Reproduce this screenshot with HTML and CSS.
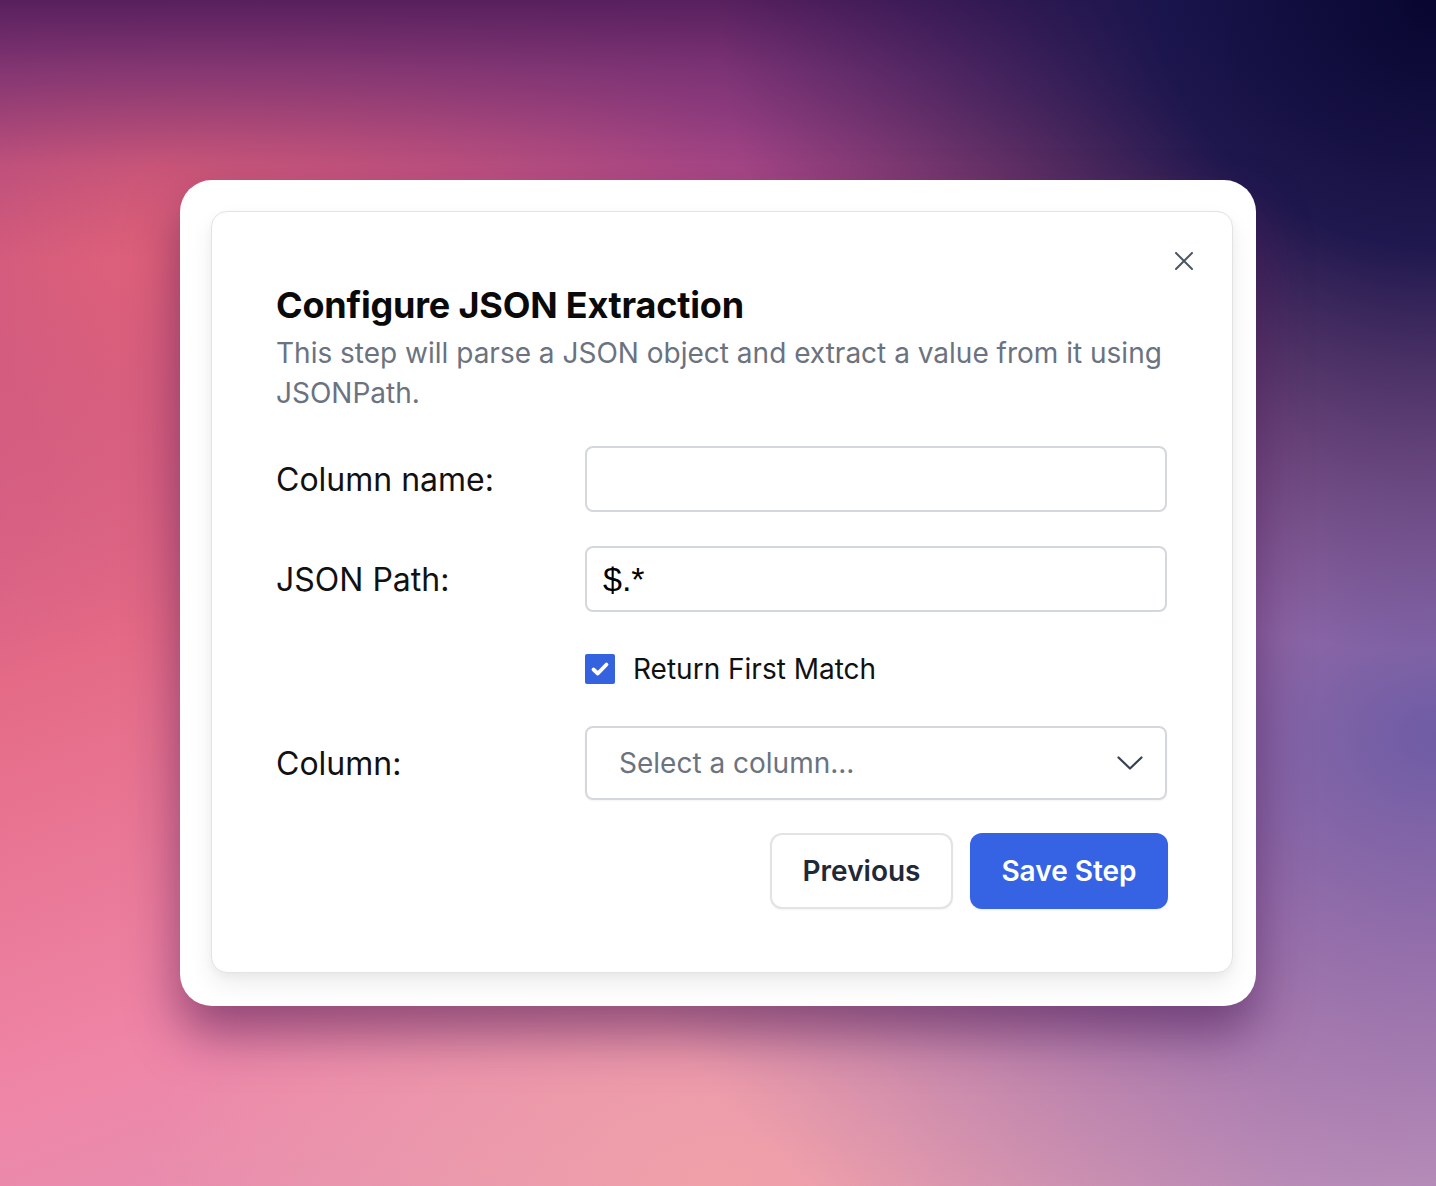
FILE: index.html
```html
<!DOCTYPE html>
<html lang="en">
<head>
<meta charset="utf-8">
<title>Configure JSON Extraction</title>
<link rel="stylesheet" href="styles.css">
</head>
<body>
  <div class="frame">
    <div class="modal">
      <button class="close" aria-label="Close">
        <svg width="18" height="18" viewBox="0 0 18 18" fill="none" stroke="#4b5563" stroke-width="2" stroke-linecap="round"><path d="M1 1L17 17M17 1L1 17"/></svg>
      </button>
      <h1 class="title">Configure JSON Extraction</h1>
      <p class="desc">This step will parse a JSON object and extract a value from it using JSONPath.</p>
      <div class="form">
        <label class="label">Column name:</label>
        <div class="input"></div>
        <label class="label">JSON Path:</label>
        <div class="input"><span class="value">$.*</span></div>
        <div></div>
        <div class="check-row">
          <span class="checkbox">
            <svg width="30" height="30" viewBox="0 0 30 30" fill="none" stroke="#fff" stroke-width="3.8" stroke-linecap="round" stroke-linejoin="round"><path d="M8.5 15.5L12.8 19.5L21.5 10.5"/></svg>
          </span>
          <span class="check-label">Return First Match</span>
        </div>
        <label class="label">Column:</label>
        <div class="select">
          <span class="placeholder">Select a column...</span>
          <svg width="26" height="14" viewBox="0 0 26 14" fill="none" stroke="#374151" stroke-width="2.2" stroke-linecap="round" stroke-linejoin="round"><path d="M1.5 1.5L13 12.5L24.5 1.5"/></svg>
        </div>
        <div></div>
        <div class="actions">
          <button class="btn btn-secondary">Previous</button>
          <button class="btn btn-primary">Save Step</button>
        </div>
      </div>
    </div>
  </div>
</body>
</html>
```
FILE: styles.css
```css
* { box-sizing: border-box; }
html, body { margin: 0; padding: 0; }
body {
  width: 1436px;
  height: 1186px;
  display: flex;
  align-items: center;
  justify-content: center;
  font-family: Inter, "Noto Sans", sans-serif;
  background-color: #e98aa6;
  background-image:
    radial-gradient(50% 55% at 100% 0%, #080630 0%, rgba(22,20,75,0.95) 38%, rgba(50,36,100,0) 100%),
    linear-gradient(180deg, rgba(88,32,94,1) 0%, rgba(110,44,110,0.75) 6%, rgba(150,60,120,0.3) 14%, rgba(160,70,130,0) 22%),
    radial-gradient(40% 38% at 12% 18%, rgba(226,98,120,1) 0%, rgba(226,98,120,0) 100%),
    radial-gradient(30% 25% at 50% 10%, rgba(165,70,140,1) 0%, rgba(165,70,140,0) 100%),
    radial-gradient(60% 55% at 100% 62%, rgba(110,92,165,1) 0%, rgba(110,92,165,0) 100%),
    radial-gradient(40% 30% at 50% 100%, rgba(240,160,168,1) 0%, rgba(240,160,168,0) 100%),
    linear-gradient(160deg, #9a3c88 0%, #e46a86 40%, #ef86a8 65%, #d4a0c0 100%);
  overflow: hidden;
}
.frame {
  width: 1076px;
  background: #fff;
  border-radius: 32px;
  padding: 31px 23px 33px 31px;
  box-shadow: 0 28px 50px rgba(70, 20, 80, 0.55);
}
.modal {
  position: relative;
  background: #fff;
  border: 1px solid #e3e3e6;
  border-radius: 16px;
  padding: 69px 65px 63px 64px;
  box-shadow: 0 12px 24px rgba(0, 0, 0, 0.07), 0 3px 8px rgba(0, 0, 0, 0.04);
}
.close {
  position: absolute;
  top: 40px;
  right: 39px;
  width: 18px;
  height: 18px;
  padding: 0;
  border: 0;
  background: none;
  display: flex;
}
.title {
  margin: 0;
  font-size: 36px;
  line-height: 48px;
  font-weight: 700;
  color: #0a0a0a;
  letter-spacing: -0.2px;
}
.desc {
  margin: 4px 0 0;
  font-size: 28px;
  line-height: 40px;
  color: #6b7280;
  max-width: 900px;
}
.form {
  margin-top: 33px;
  display: grid;
  grid-template-columns: 309px 1fr;
  row-gap: 34px;
  align-items: center;
}
.label {
  font-size: 32px;
  color: #111;
}
.input {
  height: 66px;
  border: 2px solid #d4d7dc;
  border-radius: 8px;
  display: flex;
  align-items: center;
  padding: 0 16px;
}
.value {
  font-family: "Liberation Sans", Arial, sans-serif;
  font-size: 34px;
  color: #000;
}
.check-row {
  height: 46px;
  display: flex;
  align-items: center;
  gap: 18px;
}
.checkbox {
  width: 30px;
  height: 30px;
  background: #3563e0;
  border-radius: 2px;
  display: flex;
}
.check-label {
  font-size: 28px;
  color: #111;
}
.select {
  height: 74px;
  border: 2px solid #d4d7dc;
  border-radius: 8px;
  display: flex;
  align-items: center;
  justify-content: space-between;
  padding: 0 22px 0 32px;
  box-shadow: 0 1px 2px rgba(0,0,0,0.05);
}
.placeholder {
  font-size: 28px;
  color: #6b7280;
}
.actions {
  margin-top: -1px;
  margin-right: -1px;
  display: flex;
  justify-content: flex-end;
  gap: 17px;
}
.btn {
  height: 76px;
  border-radius: 12px;
  font-family: Inter, "Noto Sans", sans-serif;
  font-size: 28px;
  font-weight: 600;
  cursor: pointer;
}
.btn-secondary {
  width: 183px;
  background: #fff;
  color: #1f2937;
  border: 2px solid #e3e3e6;
  box-shadow: 0 1px 2px rgba(0,0,0,0.05);
}
.btn-primary {
  width: 198px;
  background: #3563e3;
  color: #fff;
  border: 0;
  box-shadow: 0 1px 2px rgba(0,0,0,0.08);
}
```
